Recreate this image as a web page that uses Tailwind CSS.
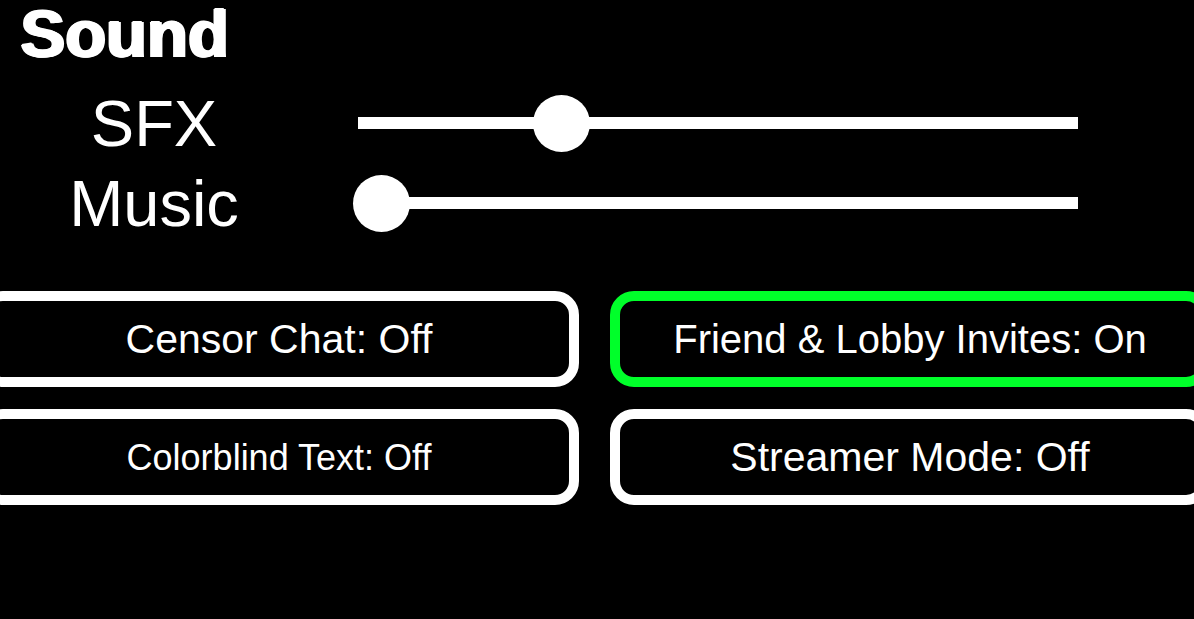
<!DOCTYPE html>
<html lang="en">
<head>
<meta charset="utf-8">
<meta name="viewport" content="width=device-width, initial-scale=1">
<title>Sound</title>
<script src="https://cdn.jsdelivr.net/npm/@tailwindcss/browser@4"></script>
</head>
<body class="min-h-screen overflow-x-hidden bg-black font-['Liberation_Sans',Arial,sans-serif] text-white">
<main>
  <section>
    <h1 class="pl-5 text-[67px] leading-[68px] font-bold [text-shadow:-1px_0_white,1px_0_white,2px_0_white,0_-1px_white]">Sound</h1>
    <div class="mt-[15px] grid grid-cols-[308px_1fr] items-center pr-[111px]">
      <label for="sfx" class="pt-px text-center text-[65px] leading-[79px]">SFX</label>
      <input id="sfx" type="range" min="0" max="100" step="any" value="26.75" class="ml-[45px] h-[58px] appearance-none bg-[linear-gradient(#fff,#fff)] bg-[length:calc(100%-10px)_12px] bg-center bg-no-repeat [&::-webkit-slider-thumb]:size-[57px] [&::-webkit-slider-thumb]:appearance-none [&::-webkit-slider-thumb]:rounded-full [&::-webkit-slider-thumb]:bg-white">
      <label for="music" class="pt-px text-center text-[65px] leading-[79px]">Music</label>
      <input id="music" type="range" min="0" max="100" step="any" value="0" class="ml-[45px] h-[58px] appearance-none bg-[linear-gradient(#fff,#fff)] bg-[length:calc(100%-10px)_12px] bg-center bg-no-repeat [&::-webkit-slider-thumb]:size-[57px] [&::-webkit-slider-thumb]:appearance-none [&::-webkit-slider-thumb]:rounded-full [&::-webkit-slider-thumb]:bg-white">
    </div>
  </section>
  <section class="-mr-4 -ml-[21px] mt-12 grid grid-cols-2 gap-x-[31px] gap-y-[22px]">
    <button type="button" class="h-24 rounded-[24px] border-10 border-white pt-0.5 text-[41px]">Censor Chat: Off</button>
    <button type="button" class="h-24 rounded-[24px] border-10 border-[#00ff2a] text-[40px]">Friend &amp; Lobby Invites: On</button>
    <button type="button" class="h-24 rounded-[24px] border-10 border-white pt-0.5 text-[36px]">Colorblind Text: Off</button>
    <button type="button" class="h-24 rounded-[24px] border-10 border-white pt-0.5 text-[41px]">Streamer Mode: Off</button>
  </section>
</main>
</body>
</html>
